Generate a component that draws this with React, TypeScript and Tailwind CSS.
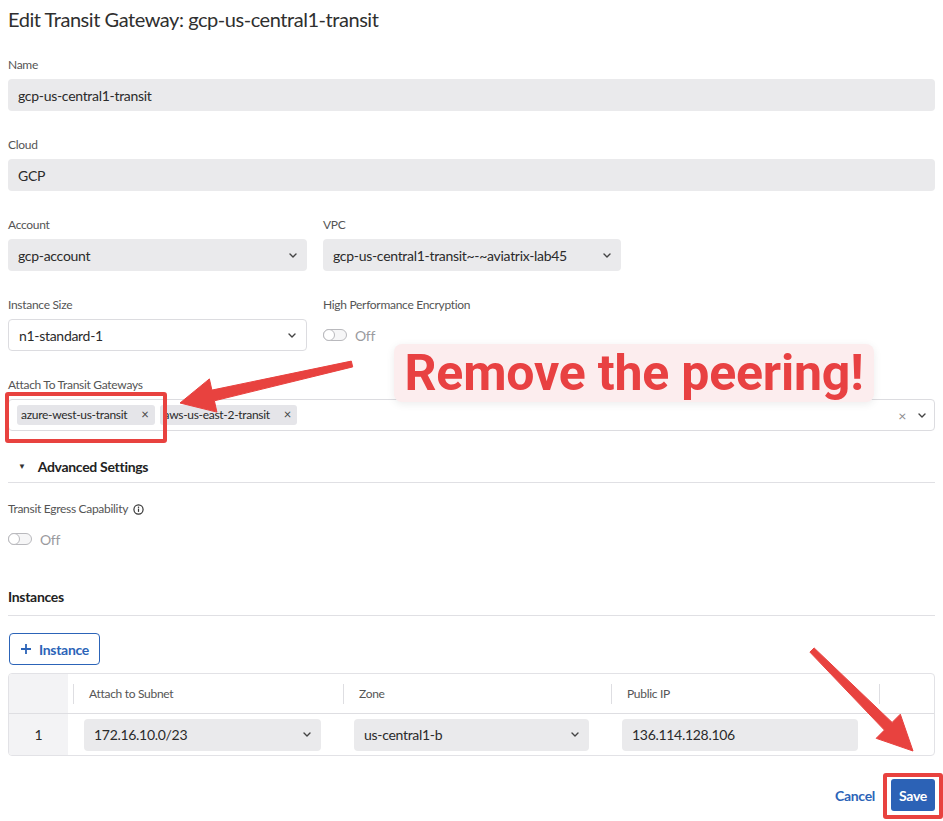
import React from "react"

const RED = "#e8423f"

function Chevron() {
  return (
    <svg width="8" height="5" viewBox="0 0 8 5" className="shrink-0">
      <path d="M1 1l3 3 3-3" fill="none" stroke="#444" strokeWidth="1.4" strokeLinecap="round" strokeLinejoin="round" />
    </svg>
  )
}

function Toggle() {
  return (
    <div className="h-[20px] flex items-center gap-2">
      <div className="relative w-[24px] h-[12px] rounded-full border border-[#b9b9bd] bg-[#f6f6f7]">
        <div className="absolute left-[-1px] top-[-1px] w-[12px] h-[12px] rounded-full border border-[#b9b9bd] bg-white" />
      </div>
      <span className="text-[14px] text-[#9a9a9e]">Off</span>
    </div>
  )
}

function Field({ label, children }: { label: string; children: React.ReactNode }) {
  return (
    <div className="flex flex-col gap-[6px]">
      <div className="text-[12px] leading-[16px] text-[#555]">{label}</div>
      {children}
    </div>
  )
}

function ReadOnly({ value }: { value: string }) {
  return (
    <div className="h-[32px] rounded-[4px] bg-[#eaeaec] px-[10px] flex items-center text-[14px] text-[#2b2b2b]">{value}</div>
  )
}

function Select({ value, white }: { value: string; white?: boolean }) {
  return (
    <div
      className={
        white
          ? "h-[32px] rounded-[4px] bg-white border border-[#dcdce0] px-[10px] flex items-center justify-between text-[14px] text-[#2b2b2b]"
          : "h-[32px] rounded-[4px] bg-[#eaeaec] px-[10px] flex items-center justify-between text-[14px] text-[#2b2b2b]"
      }
    >
      <span>{value}</span>
      <Chevron />
    </div>
  )
}

function Chip({ text }: { text: string }) {
  return (
    <div className="h-[20px] rounded-[3px] bg-[#e5e5e9] pl-[4px] pr-[6px] flex items-center gap-[14px] text-[12px] text-[#2b2b2b]">
      <span>{text}</span>
      <span className="text-[13px] text-[#444]">×</span>
    </div>
  )
}

function arrowPoints(x1: number, y1: number, x2: number, y2: number, tailW: number, neckW: number, headLen: number, headHalf: number) {
  const len = Math.hypot(x2 - x1, y2 - y1)
  const dx = (x2 - x1) / len
  const dy = (y2 - y1) / len
  const nx = -dy
  const ny = dx
  const kx = x2 - dx * headLen
  const ky = y2 - dy * headLen
  const pts = [
    [x1 + nx * tailW / 2, y1 + ny * tailW / 2],
    [kx + nx * neckW / 2, ky + ny * neckW / 2],
    [kx + nx * headHalf, ky + ny * headHalf],
    [x2, y2],
    [kx - nx * headHalf, ky - ny * headHalf],
    [kx - nx * neckW / 2, ky - ny * neckW / 2],
    [x1 - nx * tailW / 2, y1 - ny * tailW / 2],
  ]
  return pts.map((p) => p.map((v) => v.toFixed(1)).join(",")).join(" ")
}

export default function App() {
  return (
    <div className="relative w-[943px] min-h-[821px] bg-white px-2 pt-[6px] font-['Lato',sans-serif] tracking-[-0.3px] text-[#2b2b2b]">
      <h1 className="text-[20px] leading-[26px] tracking-[-0.45px] text-[#2f2f2f]">Edit Transit Gateway: gcp-us-central1-transit</h1>

      <div className="mt-[25px] flex flex-col gap-[26px]">
        <Field label="Name">
          <ReadOnly value="gcp-us-central1-transit" />
        </Field>
        <Field label="Cloud">
          <ReadOnly value="GCP" />
        </Field>
        <div className="grid grid-cols-[299px_298px] gap-x-4 gap-y-[26px]">
          <Field label="Account">
            <Select value="gcp-account" />
          </Field>
          <Field label="VPC">
            <Select value="gcp-us-central1-transit~-~aviatrix-lab45" />
          </Field>
          <Field label="Instance Size">
            <Select value="n1-standard-1" white />
          </Field>
          <Field label="High Performance Encryption">
            <div className="h-[32px] flex items-center">
              <Toggle />
            </div>
          </Field>
        </div>
        <Field label="Attach To Transit Gateways">
          <div className="h-[32px] rounded-[4px] border border-[#dcdce0] bg-white pl-[8px] pr-[8px] flex items-center justify-between">
            <div className="flex items-center gap-[5px]">
              <Chip text="azure-west-us-transit" />
              <Chip text="aws-us-east-2-transit" />
            </div>
            <div className="flex items-center gap-[12px]">
              <span className="text-[14px] text-[#8a8a8e]">×</span>
              <Chevron />
            </div>
          </div>
        </Field>
      </div>

      <div className="mt-[23px] h-[24px] flex items-center border-b border-[#e0e0e4] pb-[4px] box-content">
        <span className="ml-[10px] text-[8px] text-[#333]">▼</span>
        <span className="ml-[12px] text-[14px] font-bold text-[#222]">Advanced Settings</span>
      </div>

      <div className="mt-[18px] flex items-center gap-[5px] text-[12px] leading-[16px] text-[#555]">
        <span>Transit Egress Capability</span>
        <svg width="11" height="11" viewBox="0 0 12 12">
          <circle cx="6" cy="6" r="5" fill="none" stroke="#333" strokeWidth="1.3" />
          <rect x="5.35" y="5" width="1.3" height="3.6" fill="#333" />
          <circle cx="6" cy="3.5" r="0.8" fill="#333" />
        </svg>
      </div>
      <div className="mt-[12px]">
        <Toggle />
      </div>

      <div className="mt-[38px] h-[20px] leading-[20px] pb-[8px] box-content border-b border-[#e0e0e4] text-[14px] font-bold text-[#222]">Instances</div>

      <button className="mt-[17px] ml-px h-[32px] px-[10px] rounded-[4px] border border-[#2c64b8] flex items-center gap-[7px] text-[14px] font-bold text-[#2c64b8]">
        <svg width="12" height="12" viewBox="0 0 12 12">
          <path d="M6 1v10M1 6h10" stroke="#2c64b8" strokeWidth="1.8" />
        </svg>
        Instance
      </button>

      <div className="mt-[8px] rounded-[4px] border border-[#e2e2e6] overflow-hidden grid grid-cols-[59px_270px_268px_268px_1fr]">
        <div className="h-[39px] bg-[#f3f3f5]" />
        {["Attach to Subnet", "Zone", "Public IP", ""].map((h, i) => (
          <div key={i} className="h-[39px] flex items-center pl-[5px]">
            <div className="w-px h-[20px] bg-[#dedee2]" />
            <span className="ml-[15px] text-[12px] text-[#555]">{h}</span>
          </div>
        ))}
        <div className="col-span-5 h-px bg-[#dedee2]" />
        <div className="h-[41px] bg-[#f3f3f5] flex items-center justify-center text-[14px]">1</div>
        <div className="h-[41px] flex items-center pl-[16px] pr-[17px]">
          <div className="w-full">
            <Select value="172.16.10.0/23" />
          </div>
        </div>
        <div className="h-[41px] flex items-center pl-[16px] pr-[17px]">
          <div className="w-full">
            <Select value="us-central1-b" />
          </div>
        </div>
        <div className="h-[41px] flex items-center pl-[16px] pr-[16px]">
          <div className="w-full">
            <ReadOnly value="136.114.128.106" />
          </div>
        </div>
        <div className="h-[41px]" />
      </div>

      <div className="mt-[23px] flex items-center justify-end gap-[16px]">
        <span className="text-[14px] font-bold text-[#2c64b8]">Cancel</span>
        <button className="h-[32px] w-[44px] rounded-[3px] bg-[#2c62b6] text-[14px] font-bold text-white">Save</button>
      </div>

      {/* annotations */}
      <div className="absolute left-[394px] top-[344px] w-[480px] h-[58px] rounded-[8px] bg-[#fcedee] shadow-[0_2px_8px_rgba(0,0,0,0.08)] flex items-center justify-center">
        <span className="font-['Roboto',sans-serif] font-bold text-[50px] leading-none text-[#e84142] tracking-[-0.2px]">Remove the peering!</span>
      </div>
      <div className="absolute left-[5px] top-[392px] w-[162px] h-[51px] rounded-[3px] border-[4px] border-[#e8423f]" />
      <div className="absolute left-[883px] top-[773px] w-[60px] h-[46px] rounded-[3px] border-[4px] border-[#e8423f]" />
      <svg className="absolute left-0 top-0 pointer-events-none" width="943" height="821">
        <polygon points={arrowPoints(352, 364, 180, 403, 6, 11, 34, 17)} fill={RED} strokeLinejoin="round" stroke={RED} strokeWidth="1" />
        <polygon points={arrowPoints(812, 650, 913, 751, 6, 11, 35, 17)} fill={RED} strokeLinejoin="round" stroke={RED} strokeWidth="1" />
      </svg>
    </div>
  )
}
